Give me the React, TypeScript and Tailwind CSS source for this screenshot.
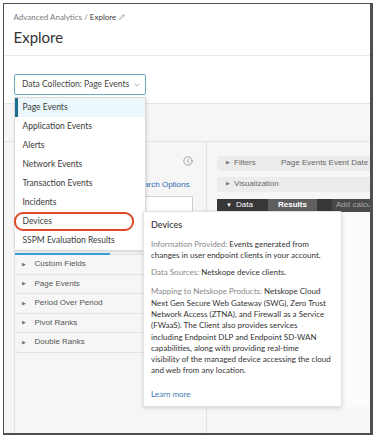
import { ChevronDown, CircleChevronLeft, Pencil } from "lucide-react";

const sources = [
    "Page Events",
    "Application Events",
    "Alerts",
    "Network Events",
    "Transaction Events",
    "Incidents",
    "Devices",
    "SSPM Evaluation Results",
];

const fieldGroups = ["Custom Fields", "Page Events", "Period Over Period", "Pivot Ranks", "Double Ranks"];

const App = () => {
    return (
        <div className="w-[377px] h-[439px] bg-white pt-[3px] pl-[3px] font-['Lato','Noto_Sans',sans-serif]">
            <div className="relative w-[370px] h-[432px] border-[1.5px] border-r-[3px] border-b-[2px] border-[#4f4f4f] bg-[#f6f6f6] overflow-hidden flex flex-col">
                {/* Header */}
                <div className="h-[52px] shrink-0 bg-white border-b border-[#e8e8e8] pl-[9.5px] pt-[8px]">
                    <div className="flex items-center h-[10px] text-[8px] leading-[10px] text-[#7a7a7a]">
                        <span>Advanced Analytics /&nbsp;</span>
                        <span className="text-[#3d3d3d]">Explore</span>
                        <Pencil size={6} strokeWidth={2} className="ml-[3px] text-[#777]" />
                    </div>
                    <h1 className="mt-[6px] text-[15px] leading-[18px] text-[#333]">Explore</h1>
                </div>

                {/* Toolbar */}
                <div className="h-[48px] shrink-0 bg-white border-b border-[#e3e3e3] pl-[9.5px] pt-[18px]">
                    <button className="h-[21px] w-[132px] border border-[#6fa8c4] rounded-[2px] flex items-center pl-[7.5px] text-[8.5px] text-[#444]">
                        Data Collection: Page Events
                        <ChevronDown size={8} strokeWidth={1.5} className="ml-[4px] text-[#666]" />
                    </button>
                </div>

                {/* Band */}
                <div className="h-[38px] shrink-0 border-b border-[#e3e3e3]"></div>

                {/* Main */}
                <div className="flex flex-1 font-['Liberation_Sans',sans-serif]">
                    <div className="w-[9.5px] shrink-0"></div>
                    <div className="w-[193px] shrink-0 border-l border-r border-[#e3e3e3] flex flex-col">
                        <div className="h-[38px] flex items-center justify-end pr-[13px]">
                            <CircleChevronLeft size={10} strokeWidth={1.5} className="text-[#777]" />
                        </div>
                        <div className="h-[10px] leading-[10px] text-[8px] text-[#2f6db5] text-right pr-[16px]">Search Options</div>
                        <div className="mt-[6px] ml-[8px] mr-[13px] h-[22px] bg-white border border-[#d0d0d0]"></div>
                        <div className="h-[35px]"></div>
                        <div className="h-[2px] border-b border-[#e3e3e3]">
                            <div className="w-[95px] h-[2px] bg-[#3aa2d9]"></div>
                        </div>
                        {fieldGroups.map((g) => (
                            <div key={g} className="h-[19.5px] border-b border-[#e3e3e3] flex items-center text-[8px] text-[#555]">
                                <span className="w-[20px] pl-[7px] text-[5px] text-[#777]">▶</span>
                                <span>{g}</span>
                            </div>
                        ))}
                    </div>
                    <div className="flex-1 min-w-0 pl-[10.5px] pt-[13.5px] overflow-hidden">
                        <div className="h-[15px] rounded-l-[3px] bg-[#ececec] flex items-center pl-[9px] text-[8px] text-[#666] whitespace-nowrap">
                            <span className="text-[5px] text-[#777] mr-[4px]">▶</span>
                            <span className="inline-block w-[47px] shrink-0">Filters</span>
                            <span>Page Events Event Date is in</span>
                        </div>
                        <div className="mt-[6px] h-[15px] rounded-l-[3px] bg-[#ececec] flex items-center pl-[9px] text-[8px] text-[#666] whitespace-nowrap">
                            <span className="text-[5px] text-[#777] mr-[4px]">▶</span>
                            <span>Visualization</span>
                        </div>
                        <div className="mt-[7px] h-[13px] bg-[#383838] flex items-stretch text-[8px] whitespace-nowrap">
                            <div className="w-[51px] shrink-0 flex items-center pl-[9px] text-white">
                                <span className="text-[6px] mr-[4px]">▼</span>Data
                            </div>
                            <div className="w-[49px] shrink-0 bg-[#5f5f5f] flex items-center justify-center font-bold text-white">Results</div>
                            <div className="ml-[15px] flex-1 bg-[#4a4a4a] flex items-center pl-[4px] text-[#a8a8a8]">Add calcul</div>
                        </div>
                        <div className="h-[195px] bg-[#fbfbfb]"></div>
                    </div>
                </div>

                {/* Data collection menu */}
                <div className="absolute left-[9.5px] top-[92.5px] w-[132px] bg-white border border-[#dcdcdc] shadow-[1px_1px_3px_rgba(0,0,0,0.12)] text-[8.5px] text-[#3a3a3a]">
                    {sources.map((s, i) => (
                        <div
                            key={s}
                            className={
                                i === 0
                                    ? "h-[19px] flex items-center pl-[5px] border-l-[3px] border-[#1d6f91] bg-[#ebf7fb]"
                                    : "h-[19px] flex items-center pl-[8px]"
                            }
                        >
                            {s}
                        </div>
                    ))}
                    <div className="absolute left-[-1px] top-[114px] w-[120px] h-[19px] border-2 border-[#e0482a] rounded-[9px]"></div>
                </div>

                {/* Devices tooltip */}
                <div className="absolute left-[138.5px] top-[206.5px] w-[199px] h-[196px] bg-white border border-[#e2e2e2] rounded-[2px] shadow-[0_1px_4px_rgba(0,0,0,0.15)] pl-[7.5px] pt-[7px] whitespace-nowrap">
                    <div className="text-[9px] leading-[12px] font-medium text-[#333]">Devices</div>
                    <div className="mt-[8px] text-[8px] leading-[11.3px] text-[#333]">
                        <p>
                            <span className="text-[#888]">Information Provided: </span>Events generated from<br />
                            changes in user endpoint clients in your account.
                        </p>
                        <p className="mt-[6px]">
                            <span className="text-[#888]">Data Sources: </span>Netskope device clients.
                        </p>
                        <p className="mt-[8px]">
                            <span className="text-[#888]">Mapping to Netskope Products: </span>Netskope Cloud<br />
                            Next Gen Secure Web Gateway (SWG), Zero Trust<br />
                            Network Access (ZTNA), and Firewall as a Service<br />
                            (FWaaS). The Client also provides services<br />
                            including Endpoint DLP and Endpoint SD-WAN<br />
                            capabilities, along with providing real-time<br />
                            visibility of the managed device accessing the cloud<br />
                            and web from any location.
                        </p>
                        <p className="mt-[12px] text-[#3b7bb3]">Learn more</p>
                    </div>
                </div>
            </div>
        </div>
    );
};

export default App;
